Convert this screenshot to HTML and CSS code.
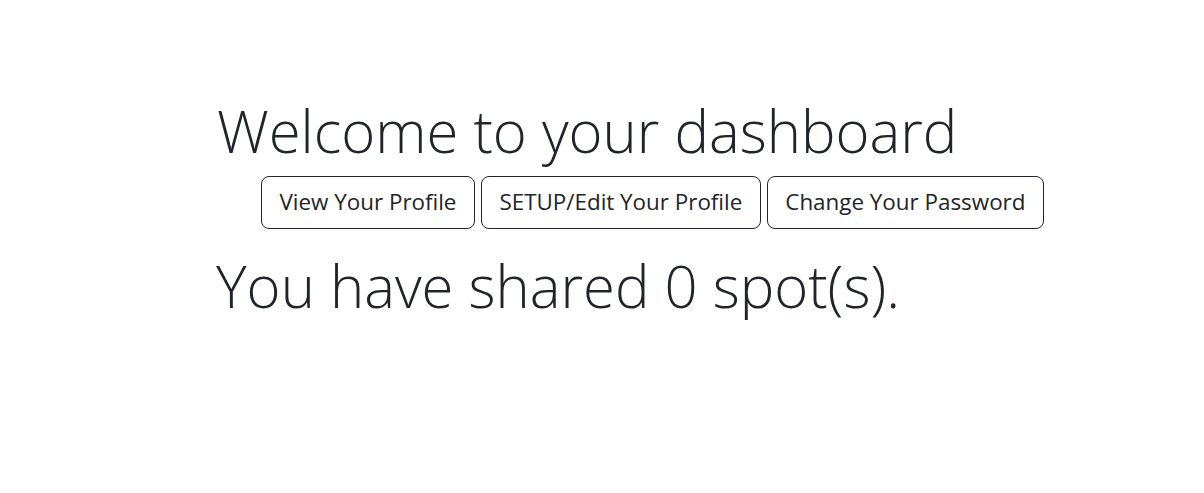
FILE: index.html
```html
<!DOCTYPE html>
<html lang="en">
<head>
<meta charset="utf-8">
<title>Dashboard</title>
<link rel="stylesheet" href="styles.css">
</head>
<body>
<main class="dashboard">
  <h1 class="title">Welcome to your dashboard</h1>
  <div class="actions">
    <a class="btn" href="#">View Your Profile</a>
    <a class="btn" href="#">SETUP/Edit Your Profile</a>
    <a class="btn" href="#">Change Your Password</a>
  </div>
  <h1 class="title shared">You have shared 0 spot(s).</h1>
</main>
</body>
</html>
```
FILE: styles.css
```css
html, body {
  margin: 0;
  padding: 0;
  background: #ffffff;
}
body {
  font-family: "Open Sans", "Noto Sans", sans-serif;
  color: #212529;
}
.dashboard {
  padding: 96px 0 0 217px;
  display: flex;
  flex-direction: column;
  align-items: flex-start;
}
.title {
  margin: 0;
  font-size: 58px;
  font-weight: 350;
  line-height: 1.2;
  color: #212529;
}
.actions {
  display: flex;
  gap: 6px;
  margin: 10px 0 0 44px;
}
.btn {
  display: inline-block;
  font-size: 22.4px;
  line-height: 30px;
  padding: 10.5px 17.5px;
  border: 1px solid #212529;
  border-radius: 8px;
  color: #212529;
  text-decoration: none;
  white-space: nowrap;
}
.shared {
  margin-top: 22px;
  margin-left: -1px;
}
```
